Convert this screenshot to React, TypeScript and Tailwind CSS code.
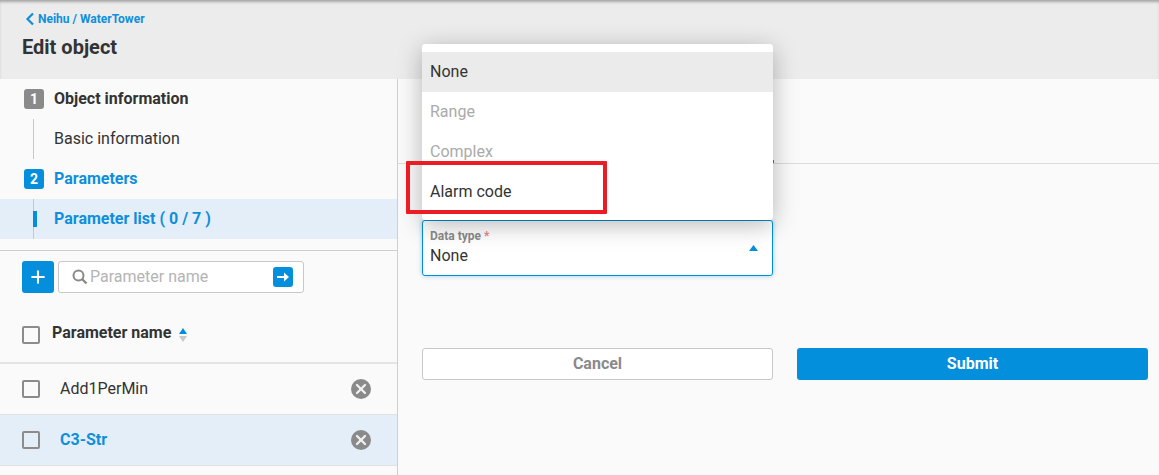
import React from "react";
import { Plus, X } from "lucide-react";

function Checkbox() {
  return (
    <span className="block h-[18px] w-[18px] shrink-0 rounded-[2px] border-2 border-[#8c8c8c] bg-transparent" />
  );
}

function RemoveButton() {
  return (
    <span className="flex h-5 w-5 items-center justify-center rounded-full bg-[#8a8a8a]">
      <X size={16} strokeWidth={3.5} className="text-[#f0f0f0]" />
    </span>
  );
}

function Step({ n, label, active }: { n: number; label: string; active?: boolean }) {
  return (
    <div className="flex h-10 items-center pl-6">
      <span
        className={`flex h-5 w-5 items-center justify-center rounded-[3px] text-sm font-bold text-white ${
          active ? "bg-[#038fdb]" : "bg-[#8a8a8a]"
        }`}
      >
        {n}
      </span>
      <span className={`ml-[10px] text-base font-bold ${active ? "text-[#0f8fdb]" : "text-[#333]"}`}>
        {label}
      </span>
    </div>
  );
}

function ParamRow({ name, selected }: { name: string; selected?: boolean }) {
  return (
    <div
      className={`flex h-[51px] shrink-0 items-center border-b border-[#e2e2e2] pl-[22px] pr-[26px] ${
        selected ? "bg-[#e4eef9]" : ""
      }`}
    >
      <Checkbox />
      <span className={`ml-5 flex-1 text-base ${selected ? "font-bold text-[#0f8fdb]" : "text-[#333]"}`}>
        {name}
      </span>
      <RemoveButton />
    </div>
  );
}

export default function App() {
  return (
    <div className="relative flex h-[475px] w-[1159px] flex-col overflow-hidden bg-[#fafafa] font-['Roboto',sans-serif] text-[#333]">
      <header className="h-[79px] shrink-0 bg-[#ececec] pl-[22px] pt-[11px] shadow-[inset_0_3px_3px_-1px_rgba(0,0,0,0.3)]">
        <div className="flex h-4 items-center text-xs font-bold text-[#0f8fdb]">
          <svg width="10" height="14" viewBox="0 0 10 14" className="ml-[3px] mr-[3px]">
            <path d="M8 1.5 2.5 7 8 12.5" fill="none" stroke="#0f8fdb" strokeWidth="2.2" />
          </svg>
          <span>Neihu / WaterTower</span>
        </div>
        <h1 className="mt-[6px] text-xl font-bold leading-7">Edit object</h1>
      </header>

      <div className="flex min-h-0 flex-1">
        <aside className="flex w-[398px] shrink-0 flex-col border-r border-[#cfcfcf]">
          <Step n={1} label="Object information" />
          <div className="ml-[33px] flex h-10 items-center border-l border-[#c8c8c8] pl-5 text-base">
            Basic information
          </div>
          <Step n={2} label="Parameters" active />
          <div className="flex h-10 bg-[#e4eef9] pl-[33px]">
            <div className="flex flex-1 items-center border-l border-[#c8c8c8] text-base font-bold text-[#0f8fdb]">
              <span className="h-4 w-1 -ml-px bg-[#038fdb]" />
              <span className="ml-[17px]">Parameter list ( 0 / 7 )</span>
            </div>
          </div>
          <div className="mt-[11px] flex h-[43px] shrink-0 items-end gap-1 border-t border-[#cfcfcf] pl-[22px]">
            <button className="flex h-8 w-8 items-center justify-center rounded-[3px] bg-[#038fdb] text-white">
              <Plus size={20} strokeWidth={2.5} />
            </button>
            <div className="flex h-8 w-[246px] items-center rounded-[3px] border border-[#c8c8c8] bg-white pl-[13px] pr-[10px]">
              <svg width="16" height="16" viewBox="0 0 16 16" className="shrink-0">
                <circle cx="6.5" cy="6.5" r="5" fill="none" stroke="#8a8a8a" strokeWidth="2" />
                <path d="M10 10l4.5 4.5" stroke="#8a8a8a" strokeWidth="2.4" />
              </svg>
              <span className="ml-[2px] flex-1 text-base text-[#b4b4b4]">Parameter name</span>
              <span className="flex h-5 w-5 items-center justify-center rounded-[3px] bg-[#038fdb]">
                <svg width="12" height="10" viewBox="0 0 12 10">
                  <path d="M0 4h7V0.5L12 5 7 9.500V6H0z" fill="#fff" />
                </svg>
              </span>
            </div>
          </div>
          <div className="flex h-[71px] shrink-0 items-center border-b-2 border-[#e4e4e4] pl-[22px] pt-[14px]">
            <Checkbox />
            <span className="ml-3 -mt-[3px] text-base font-bold">Parameter name</span>
            <span className="ml-2 flex flex-col gap-[2px]">
              <svg width="8" height="6" viewBox="0 0 8 6">
                <path d="M4 0 8 6H0z" fill="#038fdb" />
              </svg>
              <svg width="8" height="6" viewBox="0 0 8 6">
                <path d="M0 0h8L4 6z" fill="#c8c8c8" />
              </svg>
            </span>
          </div>
          <ParamRow name="Add1PerMin" />
          <ParamRow name="C3-Str" selected />
        </aside>

        <main className="flex min-w-0 flex-1 flex-col">
          <div className="flex h-[85px] shrink-0 items-end border-b border-[#dcdcdc] pl-6">
            <div className="h-[3px] w-[352px] bg-[#038fdb]" />
          </div>
          <div className="flex flex-col pl-6 pr-[11px]">
            <div className="mt-[56px] flex h-14 w-[351px] items-center justify-between rounded-[3px] border border-[#038fdb] bg-white pl-[7px] pr-[14px] shadow-[0_0_5px_rgba(3,143,219,0.4)]">
              <div className="-mt-[2px]">
                <div className="text-xs font-bold leading-[14px] text-[#8a8a8a]">
                  Data type <span className="text-[#f0808a]">*</span>
                </div>
                <div className="mt-[3px] text-base leading-5">None</div>
              </div>
              <svg width="9" height="6" viewBox="0 0 9 6">
                <path d="M4.500 0 9 6H0z" fill="#038fdb" />
              </svg>
            </div>
            <div className="mt-[72px] flex justify-between">
              <button className="h-8 w-[351px] rounded-[3px] border border-[#c8c8c8] bg-white text-base font-bold text-[#8a8a8a]">
                Cancel
              </button>
              <button className="h-8 w-[351px] rounded-[3px] bg-[#038fdb] text-base font-bold text-white">
                Submit
              </button>
            </div>
          </div>
        </main>
      </div>

      {/* open select menu */}
      <div className="absolute left-[422px] top-[44px] w-[351px] rounded-[3px] bg-white py-2 text-base shadow-[0_5px_24px_rgba(0,0,0,0.28)]">
        <div className="flex h-10 items-center bg-[#ebebeb] px-2">None</div>
        <div className="flex h-10 items-center px-2 text-[#aaa]">Range</div>
        <div className="flex h-10 items-center px-2 text-[#aaa]">Complex</div>
        <div className="flex h-10 items-center px-2">Alarm code</div>
      </div>

      {/* red annotation box */}
      <div className="absolute left-[406px] top-[161px] h-[53px] w-[201px] rounded-[1px] border-4 border-[#ed1c24]" />
    </div>
  );
}
